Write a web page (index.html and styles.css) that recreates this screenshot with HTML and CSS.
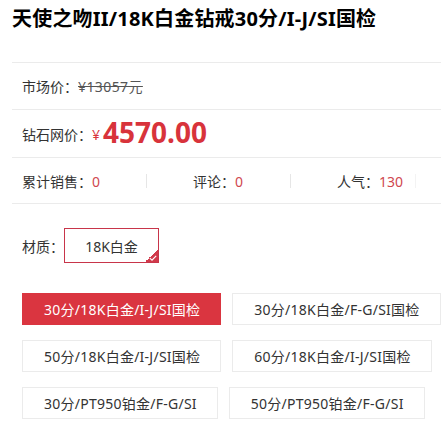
FILE: index.html
```html
<!DOCTYPE html>
<html lang="zh">
<head>
<meta charset="utf-8">
<link rel="stylesheet" href="styles.css">
</head>
<body>
<div class="page">
  <h1 class="title">天使之吻II/18K白金钻戒30分/I-J/SI国检</h1>
  <div class="row market">
    <span class="label">市场价：</span><span class="old">¥13057元</span>
  </div>
  <div class="row price">
    <span class="label">钻石网价：</span><span class="yen">¥</span><span class="big">4570.00</span>
  </div>
  <div class="row stats">
    <div class="stat first">累计销售：<span class="num">0</span></div>
    <span class="sep"></span>
    <div class="stat">评论：<span class="num">0</span></div>
    <span class="sep"></span>
    <div class="stat last">人气：<span class="num">130</span></div>
    <span class="sep faint"></span>
  </div>
  <div class="material">
    <span class="label">材质：</span>
    <span class="mat-box">18K白金<span class="corner"><svg width="8" height="6" viewBox="0 0 8 6"><path d="M0.8 3.2 L3 5.2 L7.2 0.8" fill="none" stroke="#fff" stroke-width="1.1"/></svg></span></span>
  </div>
  <div class="options">
    <div class="opt-row">
      <span class="opt active">30分/18K白金/I-J/SI国检</span>
      <span class="opt">30分/18K白金/F-G/SI国检</span>
    </div>
    <div class="opt-row">
      <span class="opt">50分/18K白金/I-J/SI国检</span>
      <span class="opt">60分/18K白金/I-J/SI国检</span>
    </div>
    <div class="opt-row">
      <span class="opt">30分/PT950铂金/F-G/SI</span>
      <span class="opt">50分/PT950铂金/F-G/SI</span>
    </div>
  </div>
</div>
</body>
</html>
```
FILE: styles.css
```css
html, body {
  margin: 0;
  padding: 0;
  background: #fff;
}
body {
  font-family: "Noto Sans", "Noto Sans CJK SC", sans-serif;
  color: #333;
  font-size: 14px;
  overflow: hidden;
}
.page {
  padding-left: 12px;
}
.title {
  margin: 0;
  padding-top: 6px;
  height: 56px;
  font-size: 20px;
  line-height: 26px;
  font-weight: bold;
  color: #000;
  letter-spacing: 0.2px;
  border-bottom: 1px solid #ebebeb;
  white-space: nowrap;
}
.row {
  display: flex;
  align-items: center;
  padding-left: 10px;
  border-bottom: 1px solid #ebebeb;
}
.market {
  height: 46px;
}
.label {
  color: #333;
}
.old {
  color: #555;
  text-decoration: line-through;
  letter-spacing: 0.4px;
}
.price {
  height: 47px;
  align-items: center;
}
.yen {
  color: #d8333b;
  font-size: 14px;
  margin-right: 3px;
  padding-top: 2px;
}
.big {
  color: #d8333b;
  font-size: 28px;
  font-weight: bold;
  line-height: 30px;
  margin-top: -4px;
}
.stats {
  height: 45px;
}
.stat {
  white-space: nowrap;
}
.stat.first {
  width: 124px;
}
.stat:not(.first) {
  width: 97px;
  padding-left: 46px;
}
.stat.last {
  width: 78px;
}
.num {
  color: #d0474f;
}
.sep {
  width: 1px;
  height: 14px;
  background: #e6e6e6;
}
.sep.faint {
  background: #f3f3f3;
}
.material {
  display: flex;
  align-items: center;
  padding-left: 10px;
  margin-top: 24px;
}
.mat-box {
  position: relative;
  box-sizing: border-box;
  width: 95px;
  height: 35px;
  border: 1px solid #c8354a;
  display: flex;
  align-items: center;
  justify-content: center;
  color: #333;
  font-size: 14px;
  margin-left: 0;
}
.corner {
  position: absolute;
  right: 0;
  bottom: 0;
  width: 13px;
  height: 13px;
  background: linear-gradient(135deg, transparent 50%, #d0394a 50%);
}
.corner svg {
  position: absolute;
  right: 1px;
  bottom: 1px;
}
.options {
  padding-left: 10px;
  margin-top: 30px;
}
.opt-row {
  display: flex;
  gap: 11px;
  margin-bottom: 15px;
}
.opt {
  box-sizing: border-box;
  height: 32px;
  padding: 0 20px 0 21px;
  border: 1px solid #ebebeb;
  display: flex;
  align-items: center;
  white-space: nowrap;
  color: #333;
  font-size: 14px;
  letter-spacing: 0.25px;
}
.opt.active {
  background: #da3540;
  border-color: #da3540;
  color: #fff;
}
```
